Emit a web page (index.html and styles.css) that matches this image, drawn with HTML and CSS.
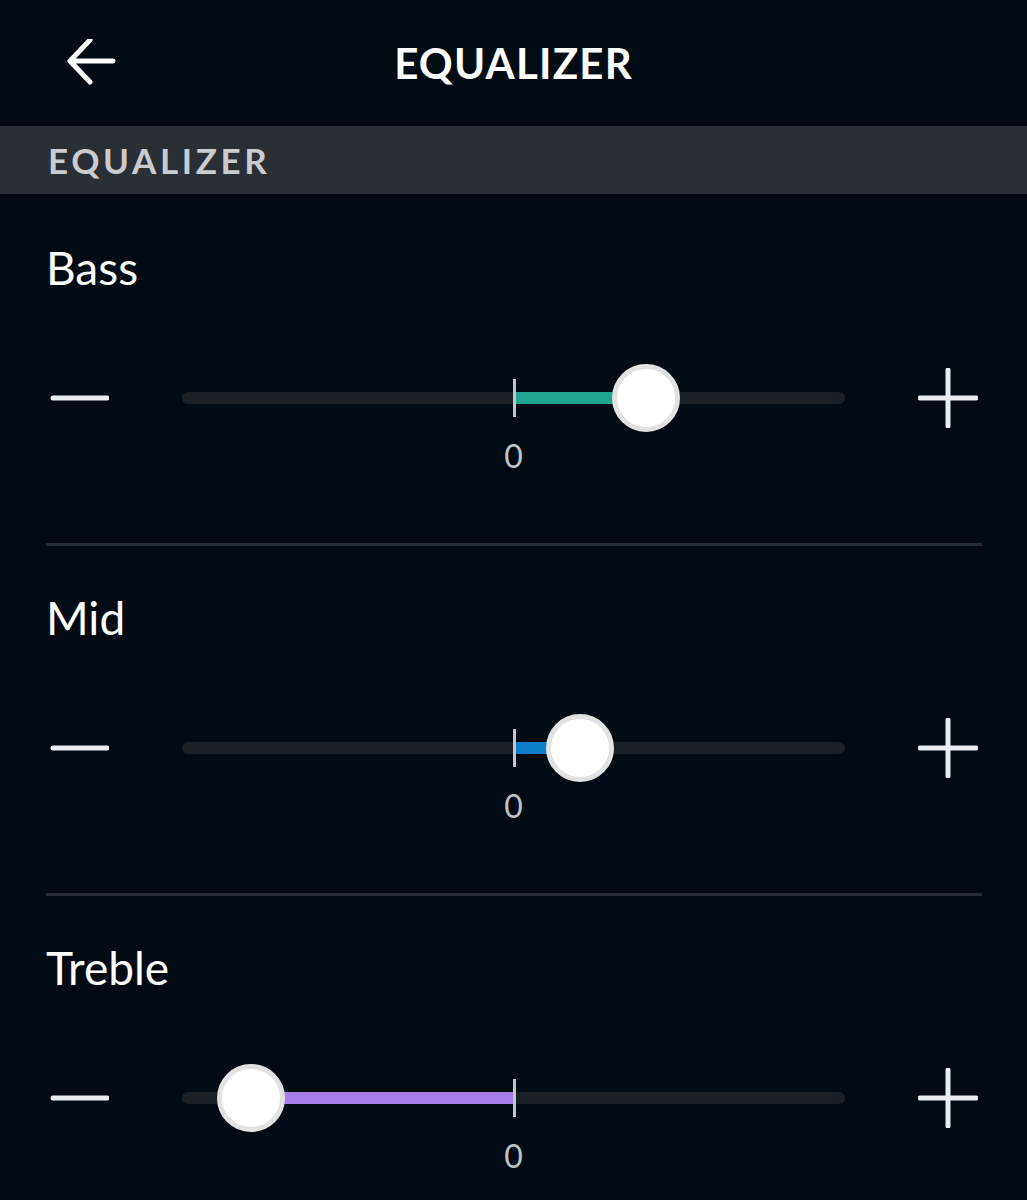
FILE: index.html
```html
<!DOCTYPE html>
<html lang="en">
<head>
  <meta charset="UTF-8" />
  <meta name="viewport" content="width=device-width, initial-scale=1.0" />
  <title>Equalizer</title>
  <link rel="stylesheet" href="styles.css">
</head>
<body>
  <header class="topbar">
    <button class="back" aria-label="Back">
      <svg width="52" height="52" viewBox="0 0 52 52">
        <path d="M4 22 H47 M24 1 L4 22 L24 43" fill="none" stroke="#fff" stroke-width="5" stroke-linecap="round" stroke-linejoin="round"/>
      </svg>
    </button>
    <h1 class="title">EQUALIZER</h1>
    <span></span>
  </header>

  <div class="section-bar">EQUALIZER</div>

  <section class="band">
    <div class="band-name">Bass</div>
    <div class="slider-row">
      <button class="step" aria-label="Decrease">
        <svg width="60" height="60" viewBox="0 0 60 60"><path d="M4 30 H58" stroke="#e9edf1" stroke-width="5" stroke-linecap="round"/></svg>
      </button>
      <div class="track">
        <div class="fill teal" style="left: 50%; width: 20%;"></div>
        <div class="tick"></div>
        <div class="knob" style="left: 70%;"></div>
      </div>
      <button class="step" aria-label="Increase">
        <svg width="60" height="60" viewBox="0 0 60 60"><path d="M2 30 H58 M30 2 V58" stroke="#e9edf1" stroke-width="5" stroke-linecap="round"/></svg>
      </button>
      <span></span>
      <div class="zero">0</div>
    </div>
  </section>
  <div class="divider"></div>

  <section class="band">
    <div class="band-name">Mid</div>
    <div class="slider-row">
      <button class="step" aria-label="Decrease">
        <svg width="60" height="60" viewBox="0 0 60 60"><path d="M4 30 H58" stroke="#e9edf1" stroke-width="5" stroke-linecap="round"/></svg>
      </button>
      <div class="track">
        <div class="fill blue" style="left: 50%; width: 10%;"></div>
        <div class="tick"></div>
        <div class="knob" style="left: 60.1%;"></div>
      </div>
      <button class="step" aria-label="Increase">
        <svg width="60" height="60" viewBox="0 0 60 60"><path d="M2 30 H58 M30 2 V58" stroke="#e9edf1" stroke-width="5" stroke-linecap="round"/></svg>
      </button>
      <span></span>
      <div class="zero">0</div>
    </div>
  </section>
  <div class="divider"></div>

  <section class="band">
    <div class="band-name">Treble</div>
    <div class="slider-row">
      <button class="step" aria-label="Decrease">
        <svg width="60" height="60" viewBox="0 0 60 60"><path d="M4 30 H58" stroke="#e9edf1" stroke-width="5" stroke-linecap="round"/></svg>
      </button>
      <div class="track">
        <div class="fill purple" style="left: 10.4%; width: 39.6%;"></div>
        <div class="tick"></div>
        <div class="knob" style="left: 10.4%;"></div>
      </div>
      <button class="step" aria-label="Increase">
        <svg width="60" height="60" viewBox="0 0 60 60"><path d="M2 30 H58 M30 2 V58" stroke="#e9edf1" stroke-width="5" stroke-linecap="round"/></svg>
      </button>
      <span></span>
      <div class="zero">0</div>
    </div>
  </section>
</body>
</html>
```

FILE: styles.css
```css
body, html {
  margin: 0;
  padding: 0;
  background: #020b14;
  color: #fff;
  font-family: Lato, "Open Sans", sans-serif;
  overflow: hidden;
}

button {
  background: none;
  border: none;
  padding: 0;
  cursor: pointer;
}

.topbar {
  height: 126px;
  display: grid;
  grid-template-columns: 1fr auto 1fr;
  align-items: center;
}
.back {
  justify-self: start;
  margin-left: 66px;
  margin-top: 4px;
  display: flex;
}
.title {
  margin: 0;
  font-size: 42px;
  font-weight: 700;
  letter-spacing: 1.2px;
  line-height: 1;
}

.section-bar {
  height: 68px;
  background: #2a2e35;
  display: flex;
  align-items: center;
  padding-left: 48px;
  font-size: 35px;
  font-weight: 700;
  letter-spacing: 3.6px;
  color: #c9cbcf;
}

.band {
  padding: 0 45px;
}
.band-name {
  margin-top: 51px;
  font-size: 46px;
  line-height: 46px;
  padding-left: 1px;
}

.slider-row {
  margin-top: 67px;
  display: grid;
  grid-template-columns: 68px 1fr 68px;
  grid-template-rows: 80px auto;
  column-gap: 69px;
  align-items: center;
}
.step {
  display: flex;
  justify-content: center;
  align-items: center;
}

.track {
  position: relative;
  height: 12px;
  border-radius: 6px;
  background: #1b2027;
}
.fill {
  position: absolute;
  top: 0;
  height: 12px;
}
.teal { background: #1fa48f; }
.blue { background: #0b7ec8; }
.purple { background: #a87fe9; }

.tick {
  position: absolute;
  left: 50%;
  top: -13px;
  width: 3px;
  height: 38px;
  margin-left: -1px;
  background: #c3c7cc;
}
.knob {
  position: absolute;
  top: 50%;
  width: 68px;
  height: 68px;
  box-sizing: border-box;
  border-radius: 50%;
  background: #fff;
  border: 5px solid #e2e2e3;
  transform: translate(-50%, -50%);
}

.zero {
  margin-top: 2px;
  text-align: center;
  font-size: 32px;
  line-height: 32px;
  color: #bfc3c8;
}

.divider {
  height: 3px;
  margin: 71px 45px 0 46px;
  background: #262c34;
}
.divider + .band .band-name {
  margin-top: 49px;
}
```
